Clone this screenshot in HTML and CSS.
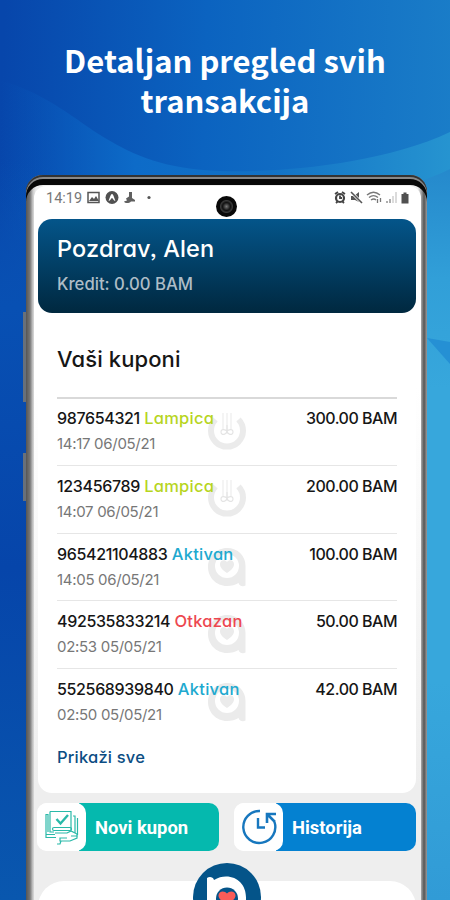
FILE: index.html
```html
<!DOCTYPE html>
<html lang="bs">
<head>
    <meta charset="UTF-8">
    <meta name="viewport" content="width=device-width, initial-scale=1.0">
    <title>Detaljan pregled svih transakcija</title>
    <link rel="stylesheet" href="styles.css">
</head>
<body>
    <svg class="defs" width="0" height="0" aria-hidden="true">
        <symbol id="mark-bulb" viewBox="0 0 40 40">
            <path d="M8.500 7.500A16 16 0 1 0 31.500 7.500" fill="none" stroke="#ebebeb" stroke-width="6"/>
            <path d="M16 1v17M20 1v21M24 1v17" fill="none" stroke="#f4f4f4" stroke-width="2"/>
            <path d="M20 13v5c0 5-6 6-6 2s5-2 6-1c1-1 6-3 6 1s-6 3-6-2" fill="none" stroke="#e4e4e4" stroke-width="1.200"/>
        </symbol>
        <symbol id="mark-a" viewBox="0 0 40 40">
            <path d="M20 1C31 1 38.500 9 38.500 19v19.500c-2 1.500-6 1-7-2.500-3 2-7 3-11.500 3C9 39 1 30 1 20S9 1 20 1z" fill="#ebebeb"/>
            <circle cx="20" cy="19" r="12" fill="#fff"/>
            <path d="M20 26c-4-3-7-5-7-9 0-4 5-5 7-2 2-3 7-2 7 2 0 4-3 6-7 9z" fill="#ebebeb"/>
        </symbol>
    </svg>

    <div class="promo">
        <svg class="backdrop" viewBox="0 0 450 900" aria-hidden="true">
            <defs>
                <linearGradient id="base" x1="0" y1=".15" x2="1" y2=".22">
                    <stop offset="0" stop-color="#0746ab"/>
                    <stop offset=".45" stop-color="#0b63c0"/>
                    <stop offset="1" stop-color="#1a7dc8"/>
                </linearGradient>
                <linearGradient id="left" x1="0" y1="0" x2="0" y2="1">
                    <stop offset="0" stop-color="#0a55b5" stop-opacity="0"/>
                    <stop offset=".2" stop-color="#0850b3"/>
                    <stop offset=".55" stop-color="#0645aa"/>
                    <stop offset="1" stop-color="#0957ae"/>
                </linearGradient>
                <linearGradient id="wave" x1="0" y1="0" x2="1" y2="0">
                    <stop offset="0" stop-color="#0858bc" stop-opacity="0"/>
                    <stop offset=".3" stop-color="#0d6bc8"/>
                    <stop offset=".6" stop-color="#1272c6"/>
                    <stop offset="1" stop-color="#2694d0"/>
                </linearGradient>
                <linearGradient id="right" x1="0" y1="0" x2="0" y2="1">
                    <stop offset="0" stop-color="#2589cc"/>
                    <stop offset=".15" stop-color="#319fd8"/>
                    <stop offset=".3" stop-color="#37a7dc"/>
                    <stop offset=".7" stop-color="#37a7dc"/>
                    <stop offset="1" stop-color="#319bd6"/>
                </linearGradient>
            </defs>
            <rect width="450" height="900" fill="url(#base)"/>
            <path d="M0 80C50 95 75 120 105 138S165 169 220 171S380 165 450 132V240H0z" fill="url(#wave)"/>
            <rect y="160" width="60" height="740" fill="url(#left)"/>
            <path d="M400 188C420 182 438 175 450 169V900H400z" fill="url(#right)"/>
            <path d="M427 338l23 4v22z" fill="#2590d4"/>
        </svg>

        <h1 class="headline">Detaljan pregled svih<br>transakcija</h1>

        <div class="phone">
            <span class="side-key side-key-volume"></span>
            <span class="side-key side-key-power"></span>
            <div class="screen">
                <div class="status-bar">
                    <div class="status-left">
                        <span class="clock">14:19</span>
                        <svg width="64" height="14" viewBox="0 0 64 14">
                            <path d="M1 1.500h11v10H1z" fill="none" stroke="#555" stroke-width="1.500"/>
                            <path d="M2 10l3-4 2 2 2-3 3 5z" fill="#555"/>
                            <circle cx="25" cy="6.500" r="6.500" fill="#505050"/>
                            <path d="M21.500 10c1-2 2-7 3.500-7s2.500 5 3.500 7c-2 0-2.500-3-3.500-3s-1.500 3-3.500 3z" fill="#fff"/>
                            <path d="M42 1h3v6l3 2v1.500h-4c-2 2-6 2-7 0l3-1-1-2 3-2z" fill="#606060"/>
                            <circle cx="62" cy="6.500" r="1.600" fill="#555"/>
                        </svg>
                    </div>
                    <svg width="76" height="14" viewBox="0 0 76 14">
                        <circle cx="6" cy="7" r="4" fill="#fff" stroke="#444" stroke-width="2.200"/>
                        <path d="M1 3l3-2M11 3L8 1M6 4.500V7h2M2 12l2-2M10 12L8 10" fill="none" stroke="#444" stroke-width="1.800"/>
                        <path d="M17 5h3l5-4v10l-4-2h-4z" fill="#555"/>
                        <path d="M17 1l11 11" stroke="#fff" stroke-width="3"/>
                        <path d="M17 1l11 11" stroke="#555" stroke-width="1.600"/>
                        <path d="M33 4c4-3.500 9-3.500 13 0M35 6.500c3-2.500 6-2.500 9 0M37 9c2-1.500 3.500-1.500 5 0" fill="none" stroke="#777" stroke-width="1.400"/>
                        <path d="M43.500 8v4M46.500 7v4" stroke="#777" stroke-width="1.300"/>
                        <path d="M53 10v2M56 8v4" stroke="#999" stroke-width="1.600"/>
                        <path d="M59 5v7M62 1v11" stroke="#ccc" stroke-width="1.400"/>
                        <path d="M67.500 3h2V1.500h3V3h2v9.500h-7z" fill="#505050"/>
                    </svg>
                    <span class="camera"></span>
                </div>

                <div class="greeting">
                    <div class="greeting-name">Pozdrav, Alen</div>
                    <div class="greeting-credit">Kredit: 0.00 BAM</div>
                </div>

                <div class="coupons">
                    <h2 class="coupons-title">Vaši kuponi</h2>
                    <div class="coupon">
                        <svg class="mark"><use href="#mark-bulb"/></svg>
                        <div class="coupon-row"><span><span class="code">987654321</span> <span class="state lampica">Lampica</span></span><span class="amount">300.00 BAM</span></div>
                        <div class="date">14:17 06/05/21</div>
                    </div>
                    <div class="coupon">
                        <svg class="mark"><use href="#mark-bulb"/></svg>
                        <div class="coupon-row"><span><span class="code">123456789</span> <span class="state lampica">Lampica</span></span><span class="amount">200.00 BAM</span></div>
                        <div class="date">14:07 06/05/21</div>
                    </div>
                    <div class="coupon">
                        <svg class="mark"><use href="#mark-a"/></svg>
                        <div class="coupon-row"><span><span class="code">965421104883</span> <span class="state aktivan">Aktivan</span></span><span class="amount">100.00 BAM</span></div>
                        <div class="date">14:05 06/05/21</div>
                    </div>
                    <div class="coupon">
                        <svg class="mark"><use href="#mark-a"/></svg>
                        <div class="coupon-row"><span><span class="code">492535833214</span> <span class="state otkazan">Otkazan</span></span><span class="amount">50.00 BAM</span></div>
                        <div class="date">02:53 05/05/21</div>
                    </div>
                    <div class="coupon">
                        <svg class="mark"><use href="#mark-a"/></svg>
                        <div class="coupon-row"><span><span class="code">552568939840</span> <span class="state aktivan">Aktivan</span></span><span class="amount">42.00 BAM</span></div>
                        <div class="date">02:50 05/05/21</div>
                    </div>
                    <a class="show-all">Prikaži sve</a>
                </div>

                <div class="actions">
                    <div class="action action-new">
                        <span class="action-icon">
                            <svg width="38" height="38" viewBox="0 0 38 38" fill="none" stroke="#2ab9a9" stroke-width="1.200">
                                <path d="M7 3.500h21v20M7 3.500v20.500h4M4.500 6.500H3V27M5 6v18M30 8h2v17M34.500 10v17M3 25v4.500h10"/>
                                <path d="M3 26.500h9M28 28h6.500"/>
                                <path d="M13.500 11l4 4.500 7.500-8.500" stroke-width="2.400"/>
                                <path d="M11 19.500h16c2 0 2 3 0 3H11c-2 0-2-3 0-3zM12 25h12l4-2 6 3v4l-7 3H17v-3h7M18 33l-1 3h-3"/>
                            </svg>
                        </span>
                        <span class="action-label">Novi kupon</span>
                    </div>
                    <div class="action action-history">
                        <span class="action-icon">
                            <svg width="38" height="38" viewBox="0 0 38 38" fill="none" stroke="#1777be" stroke-width="2.400">
                                <path d="M20 3A16 16 0 1 0 34.500 14"/>
                                <path d="M18 10v9.500h7"/>
                                <path d="M27 15V6h9M28 7l7 7" stroke-width="2.600"/>
                            </svg>
                        </span>
                        <span class="action-label">Historija</span>
                    </div>
                </div>

                <div class="bottom-sheet">
                    <svg class="brand" width="68" height="68" viewBox="0 0 68 68">
                        <circle cx="34" cy="34" r="34" fill="#045489"/>
                        <path d="M14 15c2-1.500 6-1.500 7 2 4-2.500 8-3.500 12-3.500 12 0 20 9 20 21v21H14z" fill="#fff"/>
                        <circle cx="34" cy="35.500" r="11" fill="#045489"/>
                        <path d="M34 42c-5-4-8.500-6-8.500-9.500 0-4.500 6-5.500 8.500-2 2.500-3.500 8.500-2.500 8.500 2 0 3.500-3.500 5.500-8.500 9.500z" fill="#fa5c58"/>
                    </svg>
                </div>
            </div>
        </div>
    </div>
</body>
</html>
```
FILE: styles.css
```css
* {
    box-sizing: border-box;
    margin: 0;
    padding: 0;
}

body {
    font-family: Inter, "Liberation Sans", sans-serif;
    font-feature-settings: "cv11", "ss03";
    color: #161616;
    overflow: hidden;
}

.defs {
    position: absolute;
}

.promo {
    position: relative;
    width: 450px;
    height: 900px;
    overflow: hidden;
    padding-top: 40px;
}

.backdrop {
    position: absolute;
    inset: 0;
    z-index: -1;
}

.headline {
    height: 135px;
    color: #fff;
    font-family: "Noto Sans CJK SC", sans-serif;
    font-size: 31px;
    font-weight: 700;
    line-height: 40px;
    text-align: center;
}

.phone {
    position: relative;
    width: 401px;
    height: 760px;
    margin-left: 26px;
    padding: 11px 6px 0 8px;
    border-radius: 17px 17px 0 0;
    background: linear-gradient(90deg, #555 0, #777 4px, #ccc 7px, #eee 10px, #eee 392px, #aaa 395px, #555 398px, #999 401px);
    box-shadow: inset 0 2px #333, inset 0 4px #888, inset 0 10px #080808;
}

.side-key {
    position: absolute;
    left: -3px;
    width: 3px;
    background: #68707a;
}

.side-key-volume {
    top: 137px;
    height: 90px;
}

.side-key-power {
    top: 278px;
    height: 48px;
}

.screen {
    height: 749px;
    padding: 0 5px 0 4px;
    border-radius: 12px 12px 0 0;
    background: linear-gradient(#fff 0, #fff 200px, #eee 600px);
}

.status-bar {
    position: relative;
    display: flex;
    align-items: center;
    justify-content: space-between;
    height: 33px;
    padding: 0 6px 9px 8px;
}

.status-left {
    display: flex;
    align-items: center;
    gap: 5px;
}

.clock {
    color: #777;
    font-family: Roboto, sans-serif;
    font-size: 14.500px;
}

.camera {
    position: absolute;
    left: 178px;
    top: 10px;
    width: 21px;
    height: 21px;
    border-radius: 50%;
    background: radial-gradient(circle, #777 0, #292929 3px, #111 4px, #3a3a3a 6px, #090909 7px);
}

.greeting {
    height: 94px;
    padding: 14px 19px;
    border-radius: 14px;
    background: linear-gradient(#04558a, #00283f);
}

.greeting-name {
    color: #fff;
    font-size: 23.500px;
    font-weight: 500;
    letter-spacing: 0.15px;
    line-height: 32px;
}

.greeting-credit {
    margin-top: 7px;
    color: #aebdc7;
    font-size: 16.700px;
    font-weight: 500;
    line-height: 24px;
}

.coupons {
    height: 480px;
    padding: 31px 19px 0;
    border-radius: 0 0 14px 14px;
    background: #fff;
}

.coupons-title {
    height: 53px;
    font-size: 22px;
    font-weight: 500;
    letter-spacing: 0.1px;
    line-height: 30px;
}

.coupon {
    position: relative;
    height: 67.800px;
    padding-top: 8px;
    border-top: 1px solid #e6e6e6;
    font-size: 16px;
    font-weight: 500;
}

.coupons-title + .coupon {
    padding-top: 7px;
    border-top: 2px solid #d9d9d9;
}

.mark {
    position: absolute;
    left: 150px;
    top: 13px;
    width: 40px;
    height: 40px;
}

.coupon-row {
    position: relative;
    display: flex;
    justify-content: space-between;
    line-height: 24px;
}

.code {
    letter-spacing: -0.350px;
}

.amount {
    letter-spacing: -0.500px;
}

.state {
    font-size: 16.500px;
    letter-spacing: 0.250px;
}

.lampica {
    color: #b7d51f;
}

.aktivan {
    color: #20a9cf;
}

.otkazan {
    color: #ed4750;
}

.date {
    position: relative;
    margin-top: 2px;
    color: #777;
    font-size: 15px;
    font-weight: 400;
    letter-spacing: -0.300px;
    line-height: 24px;
}

.show-all {
    display: block;
    margin-top: 9px;
    color: #0b4d83;
    font-size: 16.500px;
    font-weight: 500;
    letter-spacing: 0.200px;
    line-height: 24px;
}

.actions {
    display: grid;
    grid-template-columns: 182px 182px;
    justify-content: space-between;
    margin: 10px 0 0 -1px;
}

.action {
    display: flex;
    align-items: center;
    height: 48px;
    border-radius: 10px;
    color: #fff;
    font-family: Roboto, sans-serif;
    font-size: 18.400px;
    font-weight: 700;
}

.action-new {
    background: linear-gradient(90deg, #fff 42px, #05b9ae 42px);
}

.action-history {
    background: linear-gradient(90deg, #fff 42px, #0481d1 42px);
}

.action-icon {
    display: flex;
    align-items: center;
    justify-content: center;
    width: 49px;
    height: 48px;
    border-radius: 10px;
    background: #fff;
}

.action-label {
    margin-left: 9px;
}

.bottom-sheet {
    position: relative;
    height: 60px;
    margin-top: 30px;
    border-radius: 26px 26px 0 0;
    background: #fff;
}

.brand {
    position: absolute;
    left: 155px;
    top: -18px;
}
```
